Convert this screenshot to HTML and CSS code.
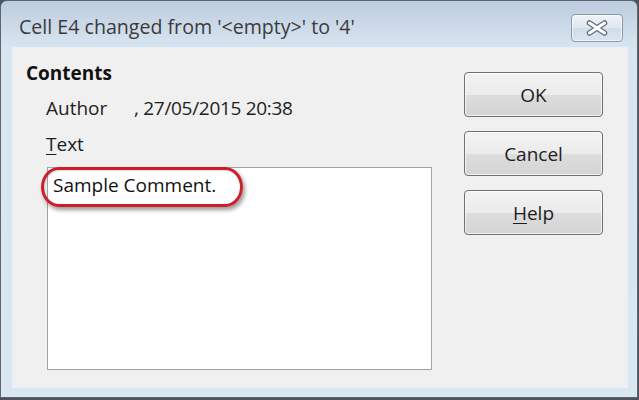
FILE: index.html
```html
<!DOCTYPE html>
<html>
<head>
<meta charset="utf-8">
<link rel="stylesheet" href="styles.css">
</head>
<body>
<div class="window">
  <div class="titlebar">
    <div class="title">Cell E4 changed from '&lt;empty&gt;' to '4'</div>
    <button class="close" aria-label="Close">
      <svg width="22" height="16" viewBox="0 0 22 16">
        <path d="M3.5 3 L18.5 13 M18.5 3 L3.5 13" stroke="#66707c" stroke-width="5.6" stroke-linecap="round" fill="none"/>
        <path d="M3.5 3 L18.5 13 M18.5 3 L3.5 13" stroke="#ffffff" stroke-width="3" stroke-linecap="round" fill="none"/>
      </svg>
    </button>
  </div>
  <div class="client">
    <div class="main">
      <div class="heading">Contents</div>
      <div class="author-row">
        <span class="label">Author</span>
        <span class="value">, 27/05/2015 20:38</span>
      </div>
      <div class="text-label"><u>T</u>ext</div>
      <div class="textbox">
        <div class="comment">Sample Comment.</div>
        <div class="mark"></div>
      </div>
    </div>
    <div class="buttons">
      <button class="btn">OK</button>
      <button class="btn">Cancel</button>
      <button class="btn"><u>H</u>elp</button>
    </div>
  </div>
</div>
</body>
</html>
```

FILE: styles.css
```css
html, body {
  margin: 0;
  padding: 0;
}
body {
  background: #4e5259;
  width: 639px;
  height: 400px;
  overflow: hidden;
  font-family: "Open Sans", "Noto Sans", sans-serif;
  color: #1e1e1e;
}
.window {
  box-sizing: border-box;
  width: 638px;
  height: 398px;
  border: 1px solid #5d6670;
  border-radius: 7px 7px 0 0;
  background: linear-gradient(#bccddf 0px, #cfdcea 30px, #d9e6f2 48px, #d9e7f3 100%);
  padding: 0 10px 10px 12px;
  display: flex;
  flex-direction: column;
}
.titlebar {
  height: 47px;
  display: flex;
  justify-content: space-between;
  align-items: flex-start;
  flex: none;
}
.title {
  margin-top: 14px;
  padding-left: 6px;
  font-size: 19.6px;
  line-height: 24px;
  color: #3b3b3b;
  white-space: nowrap;
}
.close {
  margin-top: 13px;
  margin-right: 4px;
  width: 52px;
  height: 28px;
  box-sizing: border-box;
  border: 1px solid #8c98a6;
  border-radius: 4px;
  background: linear-gradient(#eef3f8, #dfe7ef 50%, #d3dde8 51%, #dbe4ee);
  box-shadow: inset 0 0 0 1px rgba(255,255,255,0.55);
  padding: 0;
  display: flex;
  align-items: center;
  justify-content: center;
}
.client {
  flex: 1;
  background: #f0f0f0;
  box-shadow: 0 0 0 1px #e8f0f7;
  display: flex;
  justify-content: space-between;
}
.main {
  padding-left: 13px;
  padding-top: 13px;
}
.heading {
  font-size: 19px;
  line-height: 24px;
  font-weight: bold;
  color: #111;
}
.author-row {
  margin-top: 11px;
  margin-left: 20px;
  font-size: 19px;
  line-height: 24px;
  display: flex;
}
.label {
  width: 88px;
}
.value {
  letter-spacing: -0.3px;
}
.text-label {
  margin-top: 12px;
  margin-left: 20px;
  font-size: 19px;
  line-height: 24px;
}
.text-label u {
  text-underline-offset: 3px;
}
.textbox {
  position: relative;
  margin-top: 11px;
  margin-left: 21px;
  box-sizing: border-box;
  width: 385px;
  height: 203px;
  background: #ffffff;
  border: 1px solid #a3a3a3;
  padding: 5px 0 0 5px;
}
.comment {
  font-size: 19px;
  line-height: 24px;
  color: #111;
}
.mark {
  position: absolute;
  left: -7px;
  top: -1px;
  width: 202px;
  height: 40px;
  box-sizing: border-box;
  border: 3px solid #cc1f2c;
  border-radius: 18px / 20px;
  box-shadow: 2px 3px 4px rgba(0,0,0,0.4), inset 1px 1px 2px rgba(0,0,0,0.15);
}
.buttons {
  padding-top: 24px;
  margin-right: 24px;
  display: flex;
  flex-direction: column;
  gap: 14px;
}
.btn {
  width: 139px;
  height: 45px;
  box-sizing: border-box;
  border: 1px solid #707070;
  border-radius: 4px;
  background: linear-gradient(#f3f3f3, #ebebeb 50%, #dddddd 51%, #d4d4d4);
  box-shadow: inset 0 0 0 1px rgba(255,255,255,0.7);
  font-family: "Open Sans", "Noto Sans", sans-serif;
  font-size: 19px;
  color: #1e1e1e;
  padding: 0;
}
.btn u {
  text-underline-offset: 3px;
}
```
